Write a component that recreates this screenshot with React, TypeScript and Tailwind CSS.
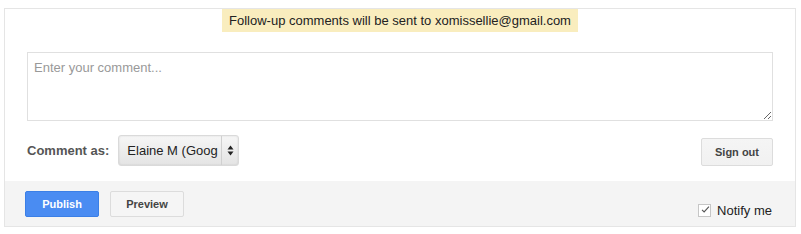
export default function App() {
  return (
    <div className="min-h-screen bg-white pl-[4px] pt-[8px] font-['Liberation_Sans',Arial,sans-serif]">
      <div className="w-[792px] border border-[#e5e5e5] bg-white">
        <div className="flex justify-center">
          <div className="h-[23px] bg-[#f9edbe] px-[7px] text-[13px] leading-[23px] text-[#222]">
            Follow-up comments will be sent to xomissellie@gmail.com
          </div>
        </div>

        <div className="px-[22px] pt-[20px]">
          <textarea
            placeholder="Enter your comment..."
            className="block h-[69px] w-full resize-y border border-[#e0e0e0] px-[6px] py-[5px] text-[13px] text-[#222] outline-none placeholder:text-[#999]"
          />
        </div>

        <div className="flex items-end justify-between px-[22px] pb-[15px] pt-[14px]">
          <div className="flex items-center gap-[9px]">
            <span className="text-[13px] font-bold text-[#555]">Comment as:</span>
            <div className="flex h-[31px] w-[121px] items-center rounded-[3px] border border-[#dadada] bg-gradient-to-b from-[#f6f6f6] to-[#e4e4e4] shadow-[inset_0_0_2px_rgba(0,0,0,0.12)]">
              <span className="flex-1 overflow-hidden whitespace-nowrap pl-[8px] text-[13px] text-[#222]">
                Elaine M (Goog
              </span>
              <div className="flex h-full w-[17px] items-center justify-center border-l border-[#d0d0d0]">
                <svg width="7" height="11" viewBox="0 0 7 11">
                  <path d="M3.5 0.5 L6.5 4.5 L0.5 4.5 Z" fill="#222" />
                  <path d="M3.5 10.5 L6.5 6.5 L0.5 6.5 Z" fill="#222" />
                </svg>
              </div>
            </div>
          </div>
          <button className="h-[28px] w-[72px] rounded-[2px] border border-[#dcdcdc] bg-gradient-to-b from-[#f5f5f5] to-[#f1f1f1] text-[11px] font-bold text-[#444]">
            Sign out
          </button>
        </div>

        <div className="flex h-[45px] items-start justify-between bg-[#f4f4f4] pl-[20px] pr-[23px] pt-[10px]">
          <div className="flex gap-[11px]">
            <button className="h-[26px] w-[74px] rounded-[2px] border border-[#3b7fe6] bg-[#4a8cf2] text-[11px] font-bold text-white">
              Publish
            </button>
            <button className="h-[26px] w-[74px] rounded-[2px] border border-[#dcdcdc] bg-[#f5f5f5] text-[11px] font-bold text-[#444]">
              Preview
            </button>
          </div>
          <label className="mt-[12px] flex items-center gap-[6px] text-[13px] leading-[15px] text-[#222]">
            <span className="flex h-[13px] w-[13px] items-center justify-center border border-[#c6c6c6] bg-white">
              <svg width="13" height="11" viewBox="0 0 13 11" className="-mt-[2px] ml-[2px]">
                <path d="M1.5 6 L4.5 9 L11.5 1.5" stroke="#555" strokeWidth="1.6" fill="none" />
              </svg>
            </span>
            Notify me
          </label>
        </div>
      </div>
    </div>
  );
}
